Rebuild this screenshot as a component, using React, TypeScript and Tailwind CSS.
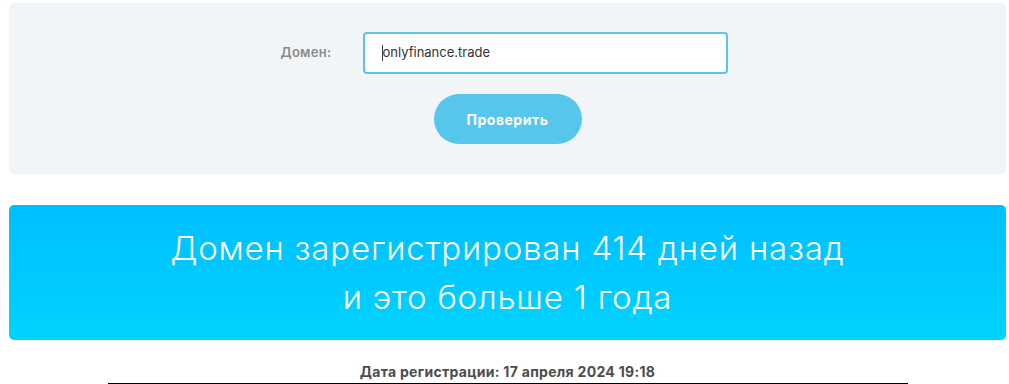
import React from "react";

export default function App() {
  return (
    <div className="w-[1009px] h-[384px] overflow-hidden bg-white pl-[9px] pr-[3px] pt-[3px] font-['Inter',sans-serif]">
      <div className="h-[171px] rounded-[5px] bg-[#f2f5f7] pt-[29px] flex flex-col items-center">
        <div className="flex items-center gap-[32px] mr-[6px]">
          <label className="text-[13px] font-semibold text-[#8b8b8b] tracking-[0.3px]">Домен:</label>
          <div className="w-[365px] h-[42px] rounded-[4px] border-2 border-[#5ac4ec] bg-white flex items-center pl-[17px]">
            <span className="w-px h-[16px] bg-[#333] mr-[-1px]" />
            <span className="text-[13px] text-[#333]">onlyfinance.trade</span>
          </div>
        </div>
        <button className="mt-[20px] w-[148px] h-[50px] rounded-full bg-[#57c6ed] text-white text-[14px] font-bold tracking-[0.5px]">
          Проверить
        </button>
      </div>
      <div className="mt-[31px] h-[135px] rounded-[5px] bg-gradient-to-b from-[#00bfff] to-[#00d3ff] flex flex-col items-center justify-center text-white font-light text-[33px] leading-[49px] tracking-[0.8px]">
        <div>Домен зарегистрирован 414 дней назад</div>
        <div>и это больше 1 года</div>
      </div>
      <div className="mt-[24px] flex flex-col items-center">
        <div className="text-[14px] font-bold text-[#4d4d4d] leading-[16px] tracking-[0.3px]">Дата регистрации: 17 апреля 2024 19:18</div>
        <div className="mt-[3px] w-[800px] h-[2px] bg-black" />
      </div>
    </div>
  );
}
